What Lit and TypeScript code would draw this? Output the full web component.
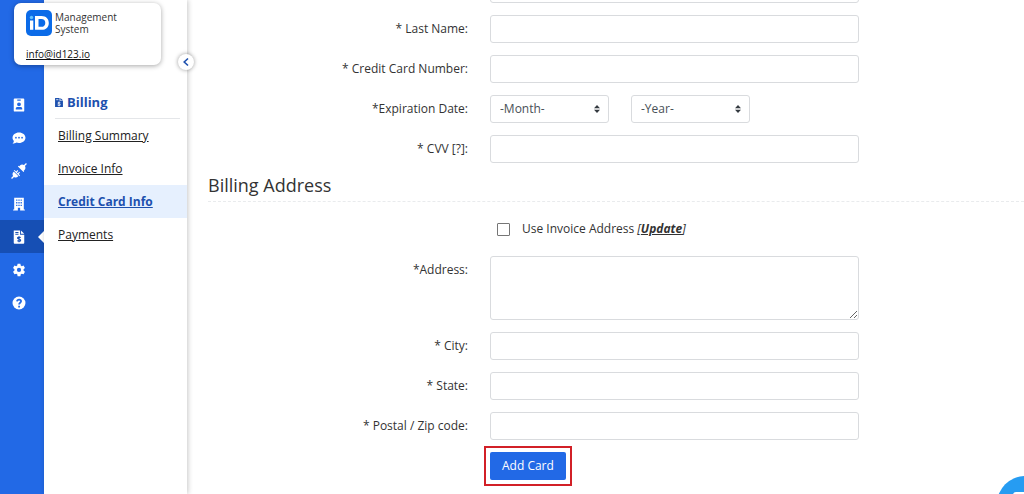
import { LitElement, html, css, svg } from "lit";
import { customElement } from "lit/decorators.js";
import { classMap } from "lit/directives/class-map.js";

const railIcons = [
  {
    name: "ID cards",
    art: svg`<path fill-rule="evenodd" d="M3 .5h10a1 1 0 0 1 1 1v13a1 1 0 0 1-1 1H3a1 1 0 0 1-1-1v-13a1 1 0 0 1 1-1zM6 1.800v1.200h4V1.800zM8 5a2.200 2.200 0 1 0 0 4.400A2.200 2.200 0 0 0 8 5zM4.300 13h7.400v-.8c0-1.300-.9-2-2-2H6.300c-1.100 0-2 .7-2 2z"/>`,
  },
  {
    name: "Messages",
    art: svg`<path fill-rule="evenodd" d="M8 1.600C3.800 1.600.6 4.200.6 7.600c0 1.500.6 2.800 1.600 3.800-.2 1.200-.8 2.200-1.600 3.100 1.800 0 3.300-.6 4.400-1.300.9.3 1.900.4 3 .4 4.200 0 7.400-2.600 7.400-6S12.200 1.600 8 1.600zM4.500 6.600a1 1 0 1 1 0 2a1 1 0 0 1 0-2zM8 6.600a1 1 0 1 1 0 2a1 1 0 0 1 0-2zM11.500 6.600a1 1 0 1 1 0 2a1 1 0 0 1 0-2z"/>`,
  },
  {
    name: "Integrations",
    art: svg`<path d="M15.900 1L15 .1l-2 2C11.500 1.200 10 1.500 9 2.500L8.100 3.400l4.500 4.500.9-.9c1-1 1.300-2.500.4-4zM7.600 2.800L6.900 3.500l5.600 5.600.7-.7zM3.500 6.900l-.7.7 5.600 5.600.7-.7-1.500-1.500 1.400-1.400-.8-.8-1.400 1.400-.9-.9 1.400-1.400-.8-.8L5.100 8.500zM2.900 8.700l-.4.300c-1 1-1.300 2.500-.4 4l-2 2 .9.900 2-2c1.500.9 3 .6 4-.4l.3-.4z"/>`,
    wide: true,
  },
  {
    name: "Institution",
    art: svg`<path fill-rule="evenodd" d="M2.500.8h11v13.400h1.200v1.300H9.300v-3.200H6.700v3.200H1.300v-1.300h1.200zM4.700 2.800v1.500h1.500V2.800zM7.250 2.800v1.500h1.500V2.800zM9.800 2.800v1.500h1.500V2.800zM4.700 5.800v1.500h1.500V5.800zM7.250 5.800v1.500h1.500V5.800zM9.800 5.800v1.500h1.500V5.800zM4.700 8.800v1.500h1.500V8.800zM7.250 8.800v1.500h1.500V8.800zM9.800 8.800v1.500h1.500V8.800z"/>`,
  },
  {
    name: "Billing",
    art: svg`<path d="M2 .5h7.200v4.800H14v9.400a1 1 0 0 1-1 1H3a1 1 0 0 1-1-1zM10.200.5L14 4.300h-3.800z"/><path class="cut" d="M3.800 2.800h3.600M3.800 4.800h3.600M9.900 8.700C9 7.800 6.300 7.800 6.300 9.200c0 1.500 3.600.8 3.600 2.400 0 1.500-2.800 1.500-3.800.5M8 7.100v6.900"/>`,
  },
  {
    name: "Settings",
    art: svg`<path fill-rule="evenodd" d="M6.400.8h3.200l.4 2.100 1.200.7 2-.7 1.600 2.800-1.600 1.400v1.600l1.600 1.400-1.600 2.800-2-.7-1.200.7-.4 2.100H6.400L6 12.900l-1.200-.7-2 .7-1.600-2.800 1.600-1.400V7.100L1.200 5.700l1.600-2.800 2 .7L6 2.900zM8 5.500a2.400 2.400 0 1 0 0 4.800a2.400 2.400 0 0 0 0-4.800z"/>`,
  },
  {
    name: "Help",
    art: svg`<circle cx="8" cy="8" r="7.400"/><path class="cut bold" d="M5.700 6.200C6 3.400 10.400 3.500 10.400 6.100 10.400 7.800 8.100 7.800 8.100 9.700M8.100 11.200v1.800"/>`,
  },
];

const billingLinks = ["Billing Summary", "Invoice Info", "Credit Card Info", "Payments"];

@customElement("billing-rail")
class BillingRail extends LitElement {
  static styles = css`
    :host { display: block; flex: none; width: 44px; background: #2269e6; padding-top: 88px; box-sizing: border-box; }
    .item { display: flex; align-items: center; justify-content: center; height: 33px; padding-right: 6px; position: relative; color: #2269e6; }
    .active { background: #164fb4; color: #164fb4; }
    .active::after { content: ""; position: absolute; right: 0; top: 11px; border: 6px solid transparent; border-left-width: 0; border-right-color: #fff; }
    svg { width: 14px; height: 14px; fill: #fff; }
    .wide { width: 16px; height: 16px; }
    .cut { fill: none; stroke: currentColor; stroke-width: 1.3; }
    .bold { stroke-width: 2; }
  `;
  render() {
    return html`<nav>
      ${railIcons.map(
        (i) => html`<a href="#" aria-label=${i.name} class=${classMap({ item: true, active: i.name === "Billing" })}>
          <svg class=${classMap({ wide: !!i.wide })} viewBox="0 0 16 16">${i.art}</svg>
        </a>`,
      )}
    </nav>`;
  }
}

@customElement("billing-menu")
class BillingMenu extends LitElement {
  static styles = css`
    :host { display: block; flex: none; width: 143px; background: #fff; padding-top: 88px; box-sizing: border-box; box-shadow: 1px 0 5px rgba(0, 0, 0, 0.22); position: relative; }
    .title { display: flex; align-items: center; gap: 4px; height: 28px; padding-bottom: 2px; margin: 0 7px 0 11px; border-bottom: 1px solid #e4e6e9; color: #1d50ae; font-size: 13px; font-weight: 700; }
    .title svg { width: 8px; height: 9px; fill: #1d50ae; }
    .cut { fill: none; stroke: #fff; stroke-width: 1.4; }
    .link { display: flex; align-items: center; height: 33px; padding-left: 14px; color: #222; font-size: 12px; text-decoration: underline; }
    .active { background: #e6f0fe; color: #1d50ae; font-weight: 700; }
    .toggle { position: absolute; right: -7px; top: 54px; width: 16px; height: 16px; padding: 0; border: 0; border-radius: 50%; background: #fff; box-shadow: 0 0 4px rgba(0, 0, 0, 0.4); display: grid; place-items: center; }
    .toggle svg { width: 8px; height: 10px; fill: none; stroke: #1d50ae; stroke-width: 1.600; }
  `;
  render() {
    return html`
      <button class="toggle" aria-label="Collapse menu"><svg viewBox="0 0 8 10"><path d="M6 1.500L2.200 5 6 8.500" /></svg></button>
      <div class="title">
        <svg viewBox="0 0 14 16"><path d="M0 0h8v5h6v11H0zM9.500 0L14 4H9.500z" /><path class="cut" d="M2 3h4M9.500 8.500C8 7 5 7.500 5 9c0 2 4.500 1 4.500 3S6 14 4.500 12.500M7 6.500v8" /></svg>
        Billing
      </div>
      <nav>
        ${billingLinks.map(
          (t) => html`<a href="#" class=${classMap({ link: true, active: t === "Credit Card Info" })}>${t}</a>`,
        )}
      </nav>
    `;
  }
}

@customElement("card-form")
class CardForm extends LitElement {
  static styles = css`
    :host { display: block; flex: 1; min-width: 0; }
    form { display: flex; flex-direction: column; gap: 12px; margin-top: -25px; padding-left: 21px; }
    .row { display: grid; grid-template-columns: 260fr 369fr 143fr; column-gap: 22px; align-items: start; }
    .label { text-align: right; padding-top: 6px; line-height: 16px; }
    .box, .area, .select { box-sizing: border-box; width: 100%; border: 1px solid #d9dbde; border-radius: 3px; background: #fff; font: inherit; color: #495057; }
    .box { height: 28px; padding: 0 9px; }
    .area { display: block; height: 64px; padding: 6px 9px; resize: vertical; }
    .pair { display: flex; gap: 22px; }
    .picker { position: relative; display: block; width: 119px; }
    .select { appearance: none; height: 28px; padding: 0 9px; display: block; }
    .picker svg { position: absolute; right: 9px; top: 10px; width: 6px; height: 8px; fill: #343a40; pointer-events: none; }
    .heading { margin: 0; padding-bottom: 6px; border-bottom: 1px dashed #e9ebed; font-size: 18px; font-weight: 400; line-height: 20px; }
    .check { grid-column: 2; display: flex; align-items: center; gap: 12px; height: 30px; padding-left: 7px; }
    .tick { appearance: none; margin: 0; width: 13px; height: 13px; border: 1px solid #767676; border-radius: 1px; background: #fff; }
    .update { color: #333; font-style: italic; }
    .update a { color: inherit; font-weight: 700; }
    .action { grid-column: 2; justify-self: start; margin: -6px; border: 2px solid #d22027; padding: 4px; }
    .submit { display: block; height: 28px; padding: 0 12px; border: 0; border-radius: 2px; background: #2269e6; color: #fff; font: inherit; font-weight: 500; }
  `;
  field(id: string, label: string) {
    return html`<div class="row"><label class="label" for=${id}>${label}</label><input class="box" id=${id} type="text" /></div>`;
  }
  picker(name: string) {
    return html`<span class="picker">
      <select class="select" aria-label=${name}><option>-${name}-</option></select>
      <svg viewBox="0 0 6 8"><path d="M0 3.200L3 0l3 3.200zM0 4.800h6L3 8z" /></svg>
    </span>`;
  }
  render() {
    return html`<form>
      ${this.field("first", "* First Name:")} ${this.field("last", "* Last Name:")}
      ${this.field("number", "* Credit Card Number:")}
      <div class="row">
        <span class="label">*Expiration Date:</span>
        <div class="pair">${this.picker("Month")}${this.picker("Year")}</div>
      </div>
      ${this.field("cvv", "* CVV [?]:")}
      <h2 class="heading">Billing Address</h2>
      <div class="row">
        <div class="check">
          <input class="tick" id="same" type="checkbox" />
          <span><label for="same">Use Invoice Address</label> <span class="update">[<a href="#">Update</a>]</span></span>
        </div>
      </div>
      <div class="row"><label class="label" for="address">*Address:</label><textarea class="area" id="address"></textarea></div>
      ${this.field("city", "* City:")} ${this.field("state", "* State:")} ${this.field("zip", "* Postal / Zip code:")}
      <div class="row"><div class="action"><button class="submit" type="button">Add Card</button></div></div>
    </form>`;
  }
}

@customElement("app-root")
class AppRoot extends LitElement {
  static styles = css`
    :host { display: flex; position: relative; height: 100vh; overflow: hidden; background: #fff; color: #333; font: 12px/16px "Open Sans", "Noto Sans", sans-serif; }
    .brand { position: absolute; left: 14px; top: 3px; width: 147px; height: 62px; padding: 7px 12px; box-sizing: border-box; background: #fff; border-radius: 7px; box-shadow: 0 1px 5px rgba(0, 0, 0, 0.35); }
    .name { display: flex; align-items: center; gap: 3px; font-size: 10px; line-height: 12px; color: #333; }
    .name span { display: block; }
    .logo { width: 26px; height: 26px; flex: none; }
    .mail { display: block; margin-top: 10px; font-size: 10px; line-height: 16px; color: #111; }
    .chat { position: absolute; right: -29px; bottom: -38px; width: 56px; height: 56px; padding: 0; border: 0; border-radius: 50%; background: #269cf2; display: grid; place-items: center; }
    .chat svg { width: 26px; height: 26px; fill: #fff; }
  `;
  render() {
    return html`
      <billing-rail></billing-rail>
      <billing-menu></billing-menu>
      <card-form></card-form>
      <div class="brand">
        <div class="name">
          <svg class="logo" viewBox="0 0 26 26">
            <rect width="26" height="26" rx="5" fill="#0b6be8" />
            <circle cx="5.500" cy="7.500" r="1.700" fill="#62c4ff" />
            <path d="M4 10.500h3.300v9.300H4z" fill="#fff" />
            <path fill="#fff" fill-rule="evenodd" d="M9 6h6.500c4.600 0 7.300 2.800 7.300 6.900s-2.700 6.900-7.300 6.900H9zM12.500 9v7.800h2.800c2.600 0 4.000-1.500 4.000-3.900S17.900 9 15.300 9z" />
          </svg>
          <span>Management<br />System</span>
        </div>
        <a class="mail" href="#">info@id123.io</a>
      </div>
      <button class="chat" aria-label="Open chat"><svg viewBox="0 0 26 26"><path d="M4 1h18a3 3 0 0 1 3 3v21l-5-4H4a3 3 0 0 1-3-3V4a3 3 0 0 1 3-3z" /></svg></button>
    `;
  }
}
